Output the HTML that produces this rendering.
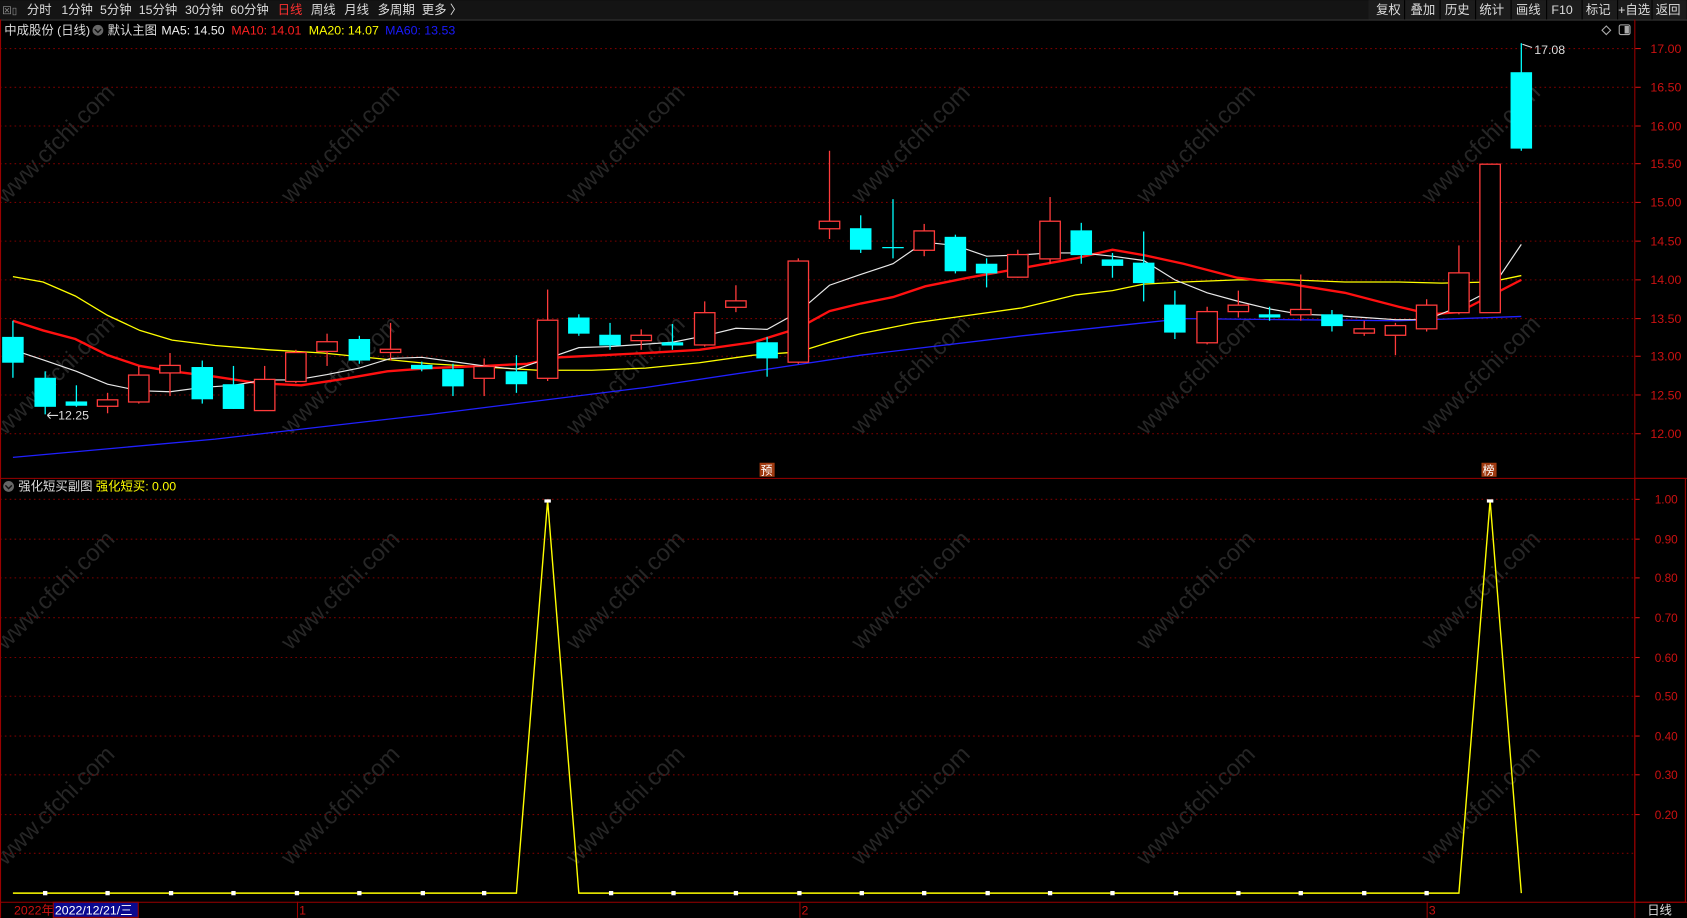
<!DOCTYPE html>
<html><head><meta charset="utf-8"><style>
html,body{margin:0;padding:0;background:#000;overflow:hidden}
svg{display:block}
text{font-family:"Liberation Sans","Noto Sans CJK SC",sans-serif}
</style></head><body>
<svg width="1687" height="918" viewBox="0 0 1568 853" xmlns="http://www.w3.org/2000/svg">
<rect width="1568" height="853" fill="#000"/>
<!-- watermarks -->
<g fill="#262626" font-size="22" font-family="Liberation Sans,sans-serif">
<text transform="translate(5,190) rotate(-45)">www.cfchi.com</text>
<text transform="translate(270,190) rotate(-45)">www.cfchi.com</text>
<text transform="translate(535,190) rotate(-45)">www.cfchi.com</text>
<text transform="translate(800,190) rotate(-45)">www.cfchi.com</text>
<text transform="translate(1065,190) rotate(-45)">www.cfchi.com</text>
<text transform="translate(1330,190) rotate(-45)">www.cfchi.com</text>
<text transform="translate(5,405) rotate(-45)">www.cfchi.com</text>
<text transform="translate(270,405) rotate(-45)">www.cfchi.com</text>
<text transform="translate(535,405) rotate(-45)">www.cfchi.com</text>
<text transform="translate(800,405) rotate(-45)">www.cfchi.com</text>
<text transform="translate(1065,405) rotate(-45)">www.cfchi.com</text>
<text transform="translate(1330,405) rotate(-45)">www.cfchi.com</text>
<text transform="translate(5,605) rotate(-45)">www.cfchi.com</text>
<text transform="translate(270,605) rotate(-45)">www.cfchi.com</text>
<text transform="translate(535,605) rotate(-45)">www.cfchi.com</text>
<text transform="translate(800,605) rotate(-45)">www.cfchi.com</text>
<text transform="translate(1065,605) rotate(-45)">www.cfchi.com</text>
<text transform="translate(1330,605) rotate(-45)">www.cfchi.com</text>
<text transform="translate(5,805) rotate(-45)">www.cfchi.com</text>
<text transform="translate(270,805) rotate(-45)">www.cfchi.com</text>
<text transform="translate(535,805) rotate(-45)">www.cfchi.com</text>
<text transform="translate(800,805) rotate(-45)">www.cfchi.com</text>
<text transform="translate(1065,805) rotate(-45)">www.cfchi.com</text>
<text transform="translate(1330,805) rotate(-45)">www.cfchi.com</text>
</g>
<!-- toolbar -->
<rect x="0" y="0" width="1568" height="18" fill="#141414"/>
<line x1="0" y1="18.5" x2="1568" y2="18.5" stroke="#333"/>
<g font-size="11.5" fill="#ddd">
<text x="2" y="13" fill="#999" font-size="9">⊠▯</text>
<text x="25" y="13">分时</text><text x="57" y="13">1分钟</text><text x="93" y="13">5分钟</text>
<text x="129" y="13">15分钟</text><text x="172" y="13">30分钟</text><text x="214" y="13">60分钟</text>
<text x="258" y="13" fill="#ff3030">日线</text><text x="289" y="13">周线</text><text x="320" y="13">月线</text>
<text x="351" y="13">多周期</text><text x="392" y="13">更多 〉</text>
</g>
<g fill="#1c1c1c"><rect x="1272" y="0" width="295" height="18"/></g>
<g stroke="#000"><line x1="1305.5" y1="0" x2="1305.5" y2="18"/><line x1="1338.5" y1="0" x2="1338.5" y2="18"/><line x1="1371.5" y1="0" x2="1371.5" y2="18"/><line x1="1404.5" y1="0" x2="1404.5" y2="18"/><line x1="1437.5" y1="0" x2="1437.5" y2="18"/><line x1="1470.5" y1="0" x2="1470.5" y2="18"/><line x1="1503.5" y1="0" x2="1503.5" y2="18"/><line x1="1535.5" y1="0" x2="1535.5" y2="18"/></g>
<g font-size="11.5" fill="#ddd">
<text x="1279" y="13">复权</text><text x="1311" y="13">叠加</text><text x="1343" y="13">历史</text><text x="1375" y="13">统计</text>
<text x="1409" y="13">画线</text><text x="1442" y="13">F10</text><text x="1474" y="13">标记</text><text x="1504" y="13">+自选</text><text x="1539" y="13">返回</text>
</g>
<!-- header main -->
<g font-size="11.5">
<text x="4" y="32" fill="#ddd">中成股份 (日线)</text>
<circle cx="91" cy="28" r="5" fill="#666"/><path d="M88 27 L91 30 L94 27" stroke="#111" fill="none" stroke-width="1.3"/>
<text x="100" y="32" fill="#ddd">默认主图</text>
<text x="150" y="32" fill="#eee">MA5: 14.50</text>
<text x="215" y="32" fill="#ff2020">MA10: 14.01</text>
<text x="287" y="32" fill="#ffff00">MA20: 14.07</text>
<text x="358" y="32" fill="#1a1aff">MA60: 13.53</text>
</g>
<path d="M1493 24 L1497 28 L1493 32 L1489 28 Z" stroke="#aaa" fill="none"/>
<rect x="1505" y="23" width="10" height="9" rx="1.5" stroke="#aaa" fill="none"/><rect x="1510" y="24" width="4" height="7" fill="#aaa"/>
<!-- grid -->
<g stroke="#7a0000" stroke-dasharray="1.5,3">
<line x1="0" y1="45" x2="1518" y2="45"/><line x1="0" y1="81" x2="1518" y2="81"/><line x1="0" y1="117" x2="1518" y2="117"/>
<line x1="0" y1="152" x2="1518" y2="152"/><line x1="0" y1="188" x2="1518" y2="188"/><line x1="0" y1="224" x2="1518" y2="224"/>
<line x1="0" y1="260" x2="1518" y2="260"/><line x1="0" y1="296" x2="1518" y2="296"/><line x1="0" y1="331" x2="1518" y2="331"/>
<line x1="0" y1="367" x2="1518" y2="367"/><line x1="0" y1="403" x2="1518" y2="403"/>
<line x1="0" y1="464" x2="1518" y2="464"/><line x1="0" y1="501" x2="1518" y2="501"/><line x1="0" y1="537" x2="1518" y2="537"/>
<line x1="0" y1="574" x2="1518" y2="574"/><line x1="0" y1="611" x2="1518" y2="611"/><line x1="0" y1="647" x2="1518" y2="647"/>
<line x1="0" y1="684" x2="1518" y2="684"/><line x1="0" y1="720" x2="1518" y2="720"/><line x1="0" y1="757" x2="1518" y2="757"/><line x1="0" y1="793" x2="1518" y2="793"/>
</g>
<!-- frame -->
<g stroke="#990000" fill="none">
<line x1="1519.5" y1="18" x2="1519.5" y2="853"/>
<line x1="0" y1="444.5" x2="1568" y2="444.5"/>
<line x1="0" y1="838.5" x2="1568" y2="838.5"/>
<line x1="0.5" y1="18" x2="0.5" y2="853"/>
<rect x="1519.5" y="444.5" width="47" height="394"/>
</g>
<!-- axis labels main -->
<g font-size="11.5" fill="#cc1111">
<text x="1534" y="49">17.00</text><text x="1534" y="85">16.50</text><text x="1534" y="121">16.00</text><text x="1534" y="156">15.50</text>
<text x="1534" y="192">15.00</text><text x="1534" y="228">14.50</text><text x="1534" y="264">14.00</text><text x="1534" y="300">13.50</text>
<text x="1534" y="335">13.00</text><text x="1534" y="371">12.50</text><text x="1534" y="407">12.00</text>
</g>
<g font-size="11" fill="#cc1111">
<text x="1538" y="468">1.00</text><text x="1538" y="505">0.90</text><text x="1538" y="541">0.80</text><text x="1538" y="578">0.70</text>
<text x="1538" y="615">0.60</text><text x="1538" y="651">0.50</text><text x="1538" y="688">0.40</text><text x="1538" y="724">0.30</text><text x="1538" y="761">0.20</text>
</g>
<g stroke="#cc1111">
<line x1="1520" y1="45" x2="1525" y2="45"/><line x1="1520" y1="81" x2="1525" y2="81"/><line x1="1520" y1="117" x2="1525" y2="117"/><line x1="1520" y1="152" x2="1525" y2="152"/><line x1="1520" y1="188" x2="1525" y2="188"/><line x1="1520" y1="224" x2="1525" y2="224"/><line x1="1520" y1="260" x2="1525" y2="260"/><line x1="1520" y1="296" x2="1525" y2="296"/><line x1="1520" y1="331" x2="1525" y2="331"/><line x1="1520" y1="367" x2="1525" y2="367"/><line x1="1520" y1="403" x2="1525" y2="403"/>
<line x1="1520" y1="464" x2="1524" y2="464"/><line x1="1520" y1="501" x2="1524" y2="501"/><line x1="1520" y1="537" x2="1524" y2="537"/><line x1="1520" y1="574" x2="1524" y2="574"/><line x1="1520" y1="611" x2="1524" y2="611"/><line x1="1520" y1="647" x2="1524" y2="647"/><line x1="1520" y1="684" x2="1524" y2="684"/><line x1="1520" y1="720" x2="1524" y2="720"/><line x1="1520" y1="757" x2="1524" y2="757"/>
</g>
<!-- MA lines -->
<polyline fill="none" stroke="#ffff00" stroke-width="1.2" points="12,257 40,262 70,275 100,293 130,307 160,316 200,321 250,325 300,328 350,333 400,338 450,341 500,344 550,344 600,342 650,337 700,330 742,327 771,318 800,310 850,300 900,293 950,286 1000,274 1034,270 1063,264 1100,262 1150,260 1200,260 1250,262 1300,262 1340,263 1385,262 1414,256"/>
<polyline fill="none" stroke="#2020ff" stroke-width="1.2" points="12,425 200,408 400,385 600,360 800,330 950,312 1100,296 1200,297 1300,298 1414,294"/>
<polyline fill="none" stroke="#ff1010" stroke-width="2.2" points="12,298 40,307 70,315 100,330 130,340 160,345 200,350 240,356 280,358 320,352 360,345 400,342 450,340 490,338 520,332 560,330 600,328 650,325 700,318 742,305 771,289 800,282 830,276 860,266 900,258 950,249 1000,240 1034,232 1063,237 1100,245 1150,258 1200,264 1250,272 1300,285 1330,292 1356,290 1385,275 1414,260"/>
<polyline fill="none" stroke="#e8e8e8" stroke-width="1.1" points="12,325 42,335 71,345 100,357 129,363 158,364 188,360 217,358 246,353 275,353 304,348 334,342 363,333 392,332 421,336 450,340 480,343 509,333 538,323 567,322 596,320 625,318 655,312 684,305 713,306 742,290 771,265 800,255 830,245 859,225 888,228 917,238 946,237 976,235 1005,235 1034,238 1063,242 1092,260 1122,272 1151,280 1180,287 1209,292 1238,293 1268,295 1297,297 1326,297 1356,285 1385,270 1414,227"/>
<!-- candles: cyan -->
<g stroke="#00ffff" stroke-width="1.2">
<line x1="12" y1="298" x2="12" y2="351"/><line x1="42" y1="345" x2="42" y2="385"/><line x1="71" y1="358" x2="71" y2="378"/>
<line x1="188" y1="335" x2="188" y2="375"/><line x1="217" y1="340" x2="217" y2="380"/><line x1="334" y1="312" x2="334" y2="338"/>
<line x1="392" y1="336" x2="392" y2="345"/><line x1="421" y1="338" x2="421" y2="368"/><line x1="480" y1="330" x2="480" y2="365"/>
<line x1="538" y1="292" x2="538" y2="312"/><line x1="567" y1="300" x2="567" y2="325"/><line x1="625" y1="301" x2="625" y2="325"/>
<line x1="713" y1="313" x2="713" y2="350"/><line x1="800" y1="200" x2="800" y2="235"/><line x1="830" y1="185" x2="830" y2="240"/>
<line x1="888" y1="218" x2="888" y2="254"/><line x1="917" y1="240" x2="917" y2="267"/><line x1="1005" y1="207" x2="1005" y2="245"/>
<line x1="1034" y1="235" x2="1034" y2="258"/><line x1="1063" y1="215" x2="1063" y2="280"/><line x1="1092" y1="270" x2="1092" y2="315"/>
<line x1="1180" y1="285" x2="1180" y2="298"/><line x1="1238" y1="288" x2="1238" y2="308"/><line x1="1414" y1="40" x2="1414" y2="140"/>
<line x1="820" y1="230" x2="840" y2="230"/>
</g>
<g fill="#00ffff">
<rect x="2" y="313" width="20" height="24"/><rect x="32" y="351" width="20" height="27"/><rect x="61" y="373" width="20" height="4"/>
<rect x="178" y="341" width="20" height="30"/><rect x="207" y="357" width="20" height="23"/><rect x="324" y="315" width="20" height="20"/>
<rect x="382" y="339" width="20" height="4"/><rect x="411" y="343" width="20" height="16"/><rect x="470" y="345" width="20" height="12"/>
<rect x="528" y="295" width="20" height="15"/><rect x="557" y="311" width="20" height="10"/><rect x="615" y="318" width="20" height="3"/>
<rect x="703" y="318" width="20" height="15"/><rect x="790" y="212" width="20" height="20"/>
<rect x="878" y="220" width="20" height="32"/><rect x="907" y="245" width="20" height="9"/><rect x="995" y="214" width="20" height="23"/>
<rect x="1024" y="241" width="20" height="6"/><rect x="1053" y="244" width="20" height="19"/><rect x="1082" y="283" width="20" height="26"/>
<rect x="1170" y="292" width="20" height="3"/><rect x="1228" y="292" width="20" height="11"/><rect x="1404" y="67" width="20" height="71"/>
</g>
<!-- candles: red hollow -->
<g stroke="#ff3b3b" stroke-width="1.2" fill="#000">
<line x1="100" y1="365" x2="100" y2="384"/><rect x="90.5" y="371.5" width="19" height="6"/>
<line x1="129" y1="340" x2="129" y2="375"/><rect x="119.5" y="348.5" width="19" height="25"/>
<line x1="158" y1="328" x2="158" y2="368"/><rect x="148.5" y="339.5" width="19" height="7"/>
<line x1="246" y1="340" x2="246" y2="381"/><rect x="236.5" y="352.5" width="19" height="29"/>
<line x1="275" y1="325" x2="275" y2="356"/><rect x="265.5" y="327.5" width="19" height="27"/>
<line x1="304" y1="310" x2="304" y2="340"/><rect x="294.5" y="317.5" width="19" height="9"/>
<line x1="363" y1="300" x2="363" y2="335"/><rect x="353.5" y="324.5" width="19" height="3"/>
<line x1="450" y1="333" x2="450" y2="368"/><rect x="440.5" y="340.5" width="19" height="11"/>
<line x1="509" y1="269" x2="509" y2="354"/><rect x="499.5" y="297.5" width="19" height="54"/>
<line x1="596" y1="306" x2="596" y2="325"/><rect x="586.5" y="311.5" width="19" height="5"/>
<line x1="655" y1="280" x2="655" y2="322"/><rect x="645.5" y="290.5" width="19" height="30"/>
<line x1="684" y1="265" x2="684" y2="290"/><rect x="674.5" y="279.5" width="19" height="6"/>
<line x1="742" y1="240" x2="742" y2="338"/><rect x="732.5" y="242.5" width="19" height="94"/>
<line x1="771" y1="140" x2="771" y2="222"/><rect x="761.5" y="205.5" width="19" height="7"/>
<line x1="859" y1="208" x2="859" y2="238"/><rect x="849.5" y="214.5" width="19" height="18"/>
<line x1="946" y1="232" x2="946" y2="258"/><rect x="936.5" y="236.5" width="19" height="21"/>
<line x1="976" y1="183" x2="976" y2="245"/><rect x="966.5" y="205.5" width="19" height="35"/>
<line x1="1122" y1="285" x2="1122" y2="320"/><rect x="1112.5" y="289.5" width="19" height="29"/>
<line x1="1151" y1="270" x2="1151" y2="295"/><rect x="1141.5" y="283.5" width="19" height="6"/>
<line x1="1209" y1="255" x2="1209" y2="298"/><rect x="1199.5" y="287.5" width="19" height="5"/>
<line x1="1268" y1="298" x2="1268" y2="312"/><rect x="1258.5" y="305.5" width="19" height="4"/>
<line x1="1297" y1="300" x2="1297" y2="330"/><rect x="1287.5" y="302.5" width="19" height="9"/>
<line x1="1326" y1="278" x2="1326" y2="308"/><rect x="1316.5" y="283.5" width="19" height="22"/>
<line x1="1356" y1="228" x2="1356" y2="292"/><rect x="1346.5" y="253.5" width="19" height="37"/>
<rect x="1375.5" y="152.5" width="19" height="138"/>
</g>
<!-- annotations -->
<g font-size="11.5" fill="#ddd">
<text x="1426" y="50">17.08</text>
<text x="54" y="390">12.25</text>
</g>
<path d="M1415 41 L1424 44" stroke="#ddd" fill="none"/>
<path d="M44 386 L54 386 M44 386 L47 383 M44 386 L47 389" stroke="#ddd" fill="none"/>
<rect x="706" y="430" width="14" height="13" fill="#a03a10"/><text x="707" y="441" font-size="11" fill="#fff">预</text>
<rect x="1377" y="430" width="14" height="13" fill="#a03a10"/><text x="1378" y="441" font-size="11" fill="#fff">榜</text>
<!-- sub header -->
<circle cx="8" cy="452" r="5" fill="#666"/><path d="M5 451 L8 454 L11 451" stroke="#111" fill="none" stroke-width="1.3"/>
<text x="17" y="456" font-size="11.5" fill="#ddd">强化短买副图</text>
<text x="89" y="456" font-size="11.5" fill="#ffff00">强化短买: 0.00</text>
<!-- sub line -->
<polyline fill="none" stroke="#ffff00" stroke-width="1.3" points="12,830 480,830 509,465 538,830 1356,830 1385,465 1414,830"/>
<g fill="#fff">
<rect x="40" y="828" width="4" height="4"/><rect x="98" y="828" width="4" height="4"/><rect x="157" y="828" width="4" height="4"/><rect x="215" y="828" width="4" height="4"/>
<rect x="274" y="828" width="4" height="4"/><rect x="332" y="828" width="4" height="4"/><rect x="391" y="828" width="4" height="4"/><rect x="448" y="828" width="4" height="4"/>
<rect x="566" y="828" width="4" height="4"/><rect x="624" y="828" width="4" height="4"/><rect x="682" y="828" width="4" height="4"/><rect x="741" y="828" width="4" height="4"/>
<rect x="799" y="828" width="4" height="4"/><rect x="857" y="828" width="4" height="4"/><rect x="916" y="828" width="4" height="4"/><rect x="974" y="828" width="4" height="4"/>
<rect x="1032" y="828" width="4" height="4"/><rect x="1091" y="828" width="4" height="4"/><rect x="1149" y="828" width="4" height="4"/><rect x="1207" y="828" width="4" height="4"/>
<rect x="1266" y="828" width="4" height="4"/><rect x="1324" y="828" width="4" height="4"/>
<rect x="506" y="464" width="6" height="3"/><rect x="1382" y="464" width="6" height="3"/>
</g>
<!-- bottom axis -->
<g stroke="#990000"><line x1="276.5" y1="838" x2="276.5" y2="853"/><line x1="743.5" y1="838" x2="743.5" y2="853"/><line x1="1326.5" y1="838" x2="1326.5" y2="853"/></g>
<g font-size="11.5">
<text x="13" y="850" fill="#cc1111">2022年</text>
<rect x="49.5" y="838.5" width="79" height="14" fill="#0a0a90" stroke="#990000"/>
<text x="51" y="850" fill="#fff">2022/12/21/三</text>
<text x="278" y="850" fill="#cc1111">1</text>
<text x="745" y="850" fill="#cc1111">2</text>
<text x="1328" y="850" fill="#cc1111">3</text>
<text x="1531" y="850" fill="#ddd">日线</text>
</g>
</svg>
</body></html>
